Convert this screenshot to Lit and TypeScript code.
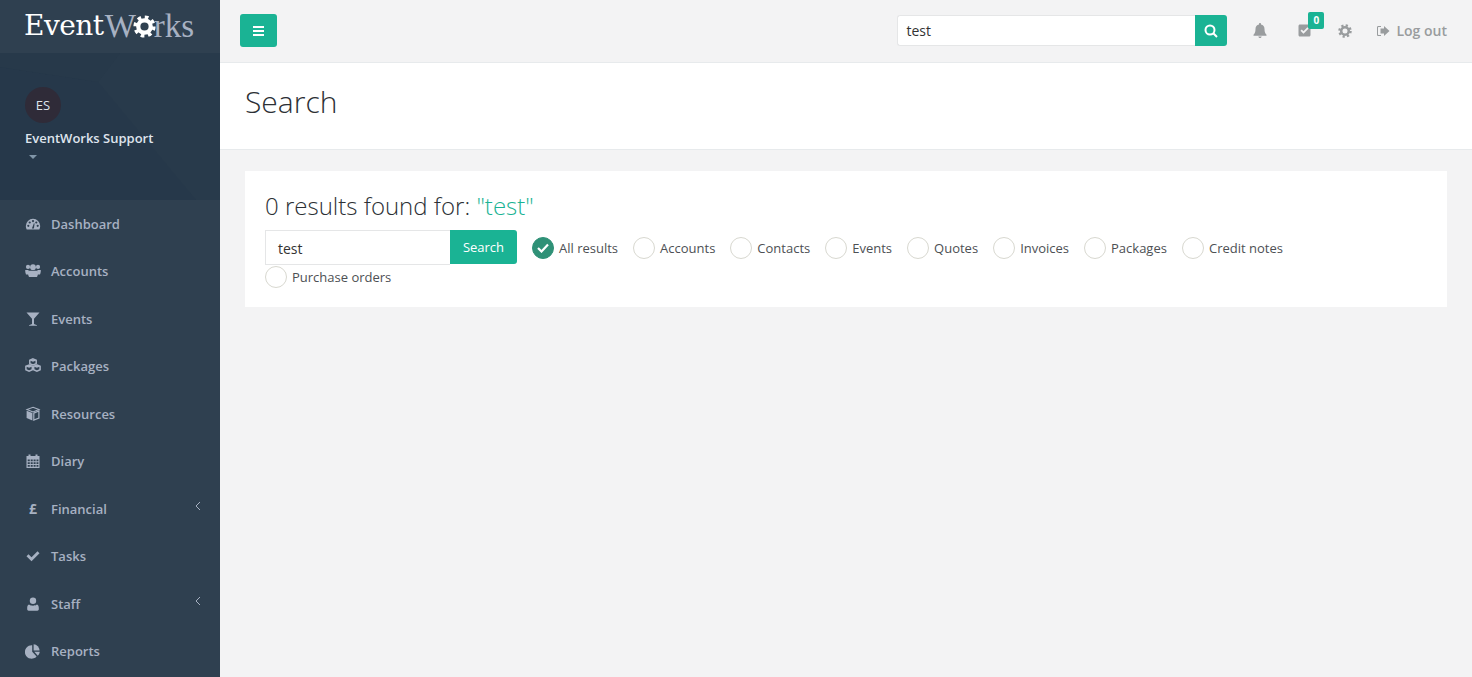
import { LitElement, html, css, svg } from "lit";
import { customElement } from "lit/decorators.js";

const gear = (size: number, color: string) => html`<svg width=${size} height=${size} viewBox="0 0 24 24">
  <circle cx="12" cy="12" r="9.6" fill="none" stroke=${color} stroke-width="4" stroke-dasharray="3.77 3.77" />
  <circle cx="12" cy="12" r="6.5" fill="none" stroke=${color} stroke-width="4.4" />
</svg>`;

const navIcons: Record<string, unknown> = {
  dashboard: svg`<path d="M.8 10a7.200 7.200 0 0 1 14.400 0c0 1.300-.3 2.500-.9 3.500H1.700C1.100 12.500.8 11.300.8 10z" /><g fill="#2f4050"><circle cx="3.300" cy="9.800" r="1.100" /><circle cx="4.700" cy="6.500" r="1.100" /><circle cx="8" cy="5.100" r="1.100" /><circle cx="12.700" cy="9.800" r="1.100" /><circle cx="11.300" cy="6.500" r="1.100" /><path d="M6.900 12.500l2-5.300.7.200-.7 5.100z" /></g>`,
  accounts: svg`<circle cx="3" cy="3.900" r="2.100" /><circle cx="13" cy="3.900" r="2.100" /><circle cx="8" cy="4.200" r="2.900" /><path d="M.2 7h3.300l.6 4.500H1C.4 10.200.1 8.500.2 7zM15.800 7h-3.300l-.6 4.500h3.100c.6-1.300.9-3 .8-4.500z" /><path d="M4 7.700h8c.7 0 1 .6 1 1.500 0 2.200-.3 3.600-1.100 4.800H4.100C3.300 12.800 3 11.400 3 9.200c0-.9.3-1.500 1-1.500z" />`,
  events: svg`<path d="M1.500 1.500h13L9 7.800V13l3 1.200v.6H4v-.6L7 13V7.800z" />`,
  packages: svg`<g fill="none" stroke="currentColor" stroke-width="1.500"><path d="M8 .9l3.200 1.300v3.500L8 7 4.800 5.700V2.200z" /><path d="M4.100 7l3.200 1.300v3.500l-3.200 1.300-3.200-1.300V8.300z" /><path d="M11.900 7l3.200 1.300v3.500l-3.200 1.300-3.200-1.300V8.300z" /></g><path d="M8 1.200l3.200 1.200L8 3.700 4.800 2.400zM4.100 7.300l3.200 1.200-3.200 1.300L.9 8.500zM11.900 7.300l3.200 1.200-3.200 1.300-3.200-1.300z" />`,
  resources: svg`<path d="M8 1.300l6 2.300-6 2.400-6-2.400z" fill="none" stroke="currentColor" stroke-width="1.100" /><path d="M1.600 4.700l5.800 2.300v7.500l-5.800-2.400z" /><path d="M8.800 7.100l5.100-2.100v7l-5.100 2.100z" fill="none" stroke="currentColor" stroke-width="1.200" />`,
  diary: svg`<path fill-rule="evenodd" d="M1.500 3h2V1.500h2V3h5V1.500h2V3h2v12h-13zM2.700 6.500v1.800h2.100V6.500zm3 0v1.800h2V6.500zm2.900 0v1.800h2V6.500zm2.900 0v1.800h1.900V6.500zM2.700 9.200V11h2.100V9.200zm3 0V11h2V9.200zm2.900 0V11h2V9.200zm2.900 0V11h1.900V9.200zM2.700 11.900v1.900h2.100v-1.900zm3 0v1.900h2v-1.900zm2.900 0v1.900h2v-1.900zm2.900 0v1.900h1.900v-1.900z" />`,
  tasks: svg`<path d="M1.500 8.300l2-2 3 3 6-6 2 2-8 8z" />`,
  staff: svg`<circle cx="8" cy="4.700" r="3.200" /><path d="M4 8.500c1 .8 2.500 1.200 4 1.200s3-.4 4-1.200c1.300.5 1.800 1.800 1.800 3.500v1.300c0 .9-.6 1.400-1.400 1.400H3.600c-.8 0-1.400-.5-1.400-1.400V12c0-1.700.5-3 1.800-3.500z" />`,
  reports: svg`<path d="M7.200 2.300v6.500l4.400 4.600A6.700 6.700 0 1 1 7.200 2.300z" /><path d="M8.600 1.300a6.500 6.500 0 0 1 6 6.100h-6z" /><path d="M9.300 8.800h5.500a6.400 6.400 0 0 1-2 4z" />`,
};

const navItems = [
  { label: "Dashboard", icon: "dashboard" },
  { label: "Accounts", icon: "accounts" },
  { label: "Events", icon: "events" },
  { label: "Packages", icon: "packages" },
  { label: "Resources", icon: "resources" },
  { label: "Diary", icon: "diary" },
  { label: "Financial", icon: "", glyph: "£", arrow: true },
  { label: "Tasks", icon: "tasks" },
  { label: "Staff", icon: "staff", arrow: true },
  { label: "Reports", icon: "reports" },
];

const filters = ["All results", "Accounts", "Contacts", "Events", "Quotes", "Invoices", "Packages", "Credit notes", "Purchase orders"];

@customElement("app-root")
export class AppRoot extends LitElement {
  static styles = css`
    :host {
      display: flex;
      height: 100vh;
      overflow: hidden;
      background: #f3f3f4;
      color: #676a6c;
      font-family: "Open Sans", sans-serif;
      font-size: 13px;
    }

    .sidebar {
      width: 220px;
      flex: none;
      background: #2f4050;
    }

    .logo {
      height: 53px;
      display: flex;
      align-items: center;
      padding: 0 0 1px 24px;
      font-family: "DejaVu Serif", serif;
      font-size: 28px;
      line-height: 1;
      color: #fff;
      letter-spacing: -0.5px;
      box-sizing: border-box;
    }

    .logo .light {
      font-family: "Liberation Serif", serif;
      font-size: 33px;
      font-weight: 400;
      color: #a7b1c2;
      letter-spacing: 0;
    }

    .logo .w {
      margin-left: 1px;
    }

    .logo svg {
      margin: 0 -2px 0 -3px;
    }

    .profile {
      position: relative;
      height: 147px;
      background: #27394a;
      padding: 34px 25px 0;
      box-sizing: border-box;
      overflow: hidden;
    }

    .facets {
      position: absolute;
      inset: 0;
    }

    .avatar {
      position: relative;
      width: 36px;
      height: 36px;
      border-radius: 50%;
      background: #2f2b38;
      color: #dfe4ed;
      display: flex;
      align-items: center;
      justify-content: center;
      font-size: 13px;
    }

    .name {
      position: relative;
      margin-top: 6px;
      color: #dfe4ed;
      font-weight: 600;
      line-height: 18px;
    }

    .caret {
      position: relative;
      width: 0;
      margin: 8px 0 0 4px;
      border: 4px solid transparent;
      border-top-color: #8095a8;
      border-bottom: 0;
    }

    .item {
      height: 47.5px;
      display: flex;
      align-items: center;
      padding: 0 19px 0 25px;
      color: #a7b1c2;
      font-weight: 600;
    }

    .item .ico {
      width: 16px;
      height: 16px;
      margin-right: 10px;
      flex: none;
      display: flex;
      align-items: center;
      justify-content: center;
      fill: currentColor;
      font-size: 14px;
      font-weight: 700;
    }

    .item .arrow {
      margin-left: auto;
      margin-top: -6px;
    }

    main {
      flex: 1;
      min-width: 0;
    }

    .topbar {
      height: 63px;
      box-sizing: border-box;
      border-bottom: 1px solid #e7eaec;
      display: flex;
      align-items: center;
      padding: 0 25px 1px 20px;
    }

    .menu-btn {
      width: 37px;
      height: 33px;
      background: #1ab394;
      border-radius: 3px;
      display: flex;
      align-items: center;
      justify-content: center;
    }

    .top-search {
      margin-left: auto;
      display: flex;
      height: 31px;
    }

    .top-search .field {
      width: 298px;
      background: #fff;
      border: 1px solid #e5e6e7;
      border-right: 0;
      border-radius: 3px 0 0 3px;
      padding-left: 8px;
      box-sizing: border-box;
      line-height: 29px;
      font-size: 14px;
      color: #333;
    }

    .top-search .go {
      width: 32px;
      background: #1ab394;
      border-radius: 0 3px 3px 0;
      display: flex;
      align-items: center;
      justify-content: center;
    }

    .tools {
      display: flex;
      align-items: center;
      color: #999c9e;
      fill: #999c9e;
      margin-left: 26px;
    }

    .tool {
      position: relative;
      display: flex;
      align-items: center;
      justify-content: center;
      width: 14px;
      height: 16px;
    }

    .bell {
      margin-right: 30px;
    }

    .tasks {
      margin-right: 27px;
    }

    .badge {
      position: absolute;
      top: -11px;
      left: 11px;
      width: 16px;
      height: 17px;
      background: #1ab394;
      border-radius: 2px;
      color: #fff;
      font-size: 10px;
      font-weight: 700;
      line-height: 17px;
      text-align: center;
    }

    .logout {
      margin-left: 24px;
      display: flex;
      align-items: center;
      gap: 6px;
      font-size: 14px;
      font-weight: 600;
    }

    .heading {
      height: 87px;
      box-sizing: border-box;
      background: #fff;
      border-bottom: 1px solid #e7eaec;
      padding: 0 25px;
      display: flex;
      align-items: center;
    }

    h2 {
      margin: 0 0 9px;
      font-size: 30px;
      font-weight: 300;
      color: #2c3035;
    }

    .card {
      margin: 21px 25px 0;
      height: 136px;
      box-sizing: border-box;
      background: #fff;
      padding: 19px 20px;
    }

    h3 {
      margin: 0 0 9px;
      font-size: 24px;
      font-weight: 300;
      line-height: 31px;
      color: #2c3035;
    }

    h3 span {
      color: #1ab394;
    }

    .filters {
      display: flex;
      flex-wrap: wrap;
      align-items: center;
      row-gap: 1px;
    }

    .search-group {
      display: flex;
      align-items: flex-start;
      height: 35px;
      margin-right: 15px;
    }

    .search-group .field {
      width: 185px;
      height: 35px;
      box-sizing: border-box;
      border: 1px solid #e5e6e7;
      border-right: 0;
      padding-left: 12px;
      font-size: 14px;
      line-height: 36px;
      color: #333;
    }

    .search-group .btn {
      width: 67px;
      height: 34px;
      background: #1ab394;
      border-radius: 0 3px 3px 0;
      color: #fff;
      font-weight: 500;
      line-height: 34px;
      text-align: center;
    }

    .radio {
      display: flex;
      align-items: center;
      gap: 5px;
      margin-right: 15px;
      line-height: 22px;
      color: #4d5054;
    }

    .circle {
      width: 22px;
      height: 22px;
      box-sizing: border-box;
      border: 1px solid #d8d8d0;
      border-radius: 50%;
      display: flex;
      align-items: center;
      justify-content: center;
    }

    .circle.on {
      background: #2f9177;
      border-color: #2f9177;
    }
  `;

  render() {
    return html`
      <aside class="sidebar">
        <div class="logo">
          <span>Event</span><span class="light w">W</span>${gear(23, "#fff")}<span class="light">rks</span>
        </div>
        <div class="profile">
          <svg class="facets" viewBox="0 0 220 147" preserveAspectRatio="none">
            <path d="M0 14L98 29 196 147H0z" fill="#26384a" />
            <path d="M98 29L120 0 220 0V147H196z" fill="#283a4b" />
            <path d="M0 0H120L98 29 0 14z" fill="#27394a" />
          </svg>
          <div class="avatar">ES</div>
          <div class="name">EventWorks Support</div>
          <div class="caret"></div>
        </div>
        <nav>
          ${navItems.map(
            (n) => html`<div class="item">
              <span class="ico">
                ${n.glyph
                  ? n.glyph
                  : html`<svg width="16" height="16" viewBox="0 0 16 16" fill="currentColor">${navIcons[n.icon]}</svg>`}
              </span>
              ${n.label}
              ${n.arrow
                ? html`<svg class="arrow" width="6" height="10" viewBox="0 0 6 10" fill="none" stroke="#a7b1c2"><path d="M5 1L1 5l4 4" /></svg>`
                : ""}
            </div>`
          )}
        </nav>
      </aside>
      <main>
        <div class="topbar">
          <div class="menu-btn">
            <svg width="11" height="10" viewBox="0 0 11 10" fill="#fff"><path d="M0 0h11v2H0zM0 4h11v2H0zM0 8h11v2H0z" /></svg>
          </div>
          <div class="top-search">
            <div class="field">test</div>
            <div class="go">
              <svg width="14" height="14" viewBox="0 0 14 14" fill="none" stroke="#fff" stroke-width="2"><circle cx="6" cy="6" r="4.500" /><path d="M9.300 9.300L13 13" /></svg>
            </div>
          </div>
          <div class="tools">
            <div class="tool bell">
              <svg width="14" height="15" viewBox="0 0 14 15"><path d="M7 0c.6 0 1 .4 1 1v.6c2.200.5 3.500 2.200 3.500 4.400 0 3 .7 4.600 2 5.700v1H.5v-1c1.300-1.100 2-2.700 2-5.700C2.500 3.800 3.800 2.100 6 1.600V1c0-.6.400-1 1-1zM5.300 13.500h3.400C8.600 14.400 7.900 15 7 15s-1.600-.6-1.700-1.500z" /></svg>
            </div>
            <div class="tool tasks">
              <svg width="13" height="13" viewBox="0 0 13 13"><path fill-rule="evenodd" d="M2 .5h9c.9 0 1.500.6 1.500 1.500v9c0 .9-.6 1.500-1.500 1.500H2c-.9 0-1.500-.6-1.500-1.500V2C.5 1.100 1.100.5 2 .5zM2.500 6.800l3 3 5.200-5.200-1.300-1.300-3.900 3.900-1.700-1.700z" /></svg>
              <div class="badge">0</div>
            </div>
            <div class="tool">${gear(14, "#999c9e")}</div>
            <div class="logout">
              <svg width="14" height="12" viewBox="0 0 14 12"><path d="M8 3.500V1l5.500 5L8 11V8.500H4.500v-5zM5 1H2.500C1.500 1 1 1.500 1 2.500v7c0 1 .5 1.500 1.500 1.500H5v-1H2.500c-.3 0-.5-.2-.5-.5v-7c0-.3.2-.5.5-.5H5z" /></svg>
              Log out
            </div>
          </div>
        </div>
        <div class="heading"><h2>Search</h2></div>
        <section class="card">
          <h3>0 results found for: <span>"test"</span></h3>
          <div class="filters">
            <div class="search-group">
              <div class="field">test</div>
              <div class="btn">Search</div>
            </div>
            ${filters.map(
              (f, i) => html`<div class="radio">
                <span class="circle ${i === 0 ? "on" : ""}">
                  ${i === 0
                    ? html`<svg width="12" height="10" viewBox="0 0 12 10" fill="none" stroke="#fff" stroke-width="2.200"><path d="M1 5l3.500 3.500L11 1.500" /></svg>`
                    : ""}
                </span>
                ${f}
              </div>`
            )}
          </div>
        </section>
      </main>
    `;
  }
}
